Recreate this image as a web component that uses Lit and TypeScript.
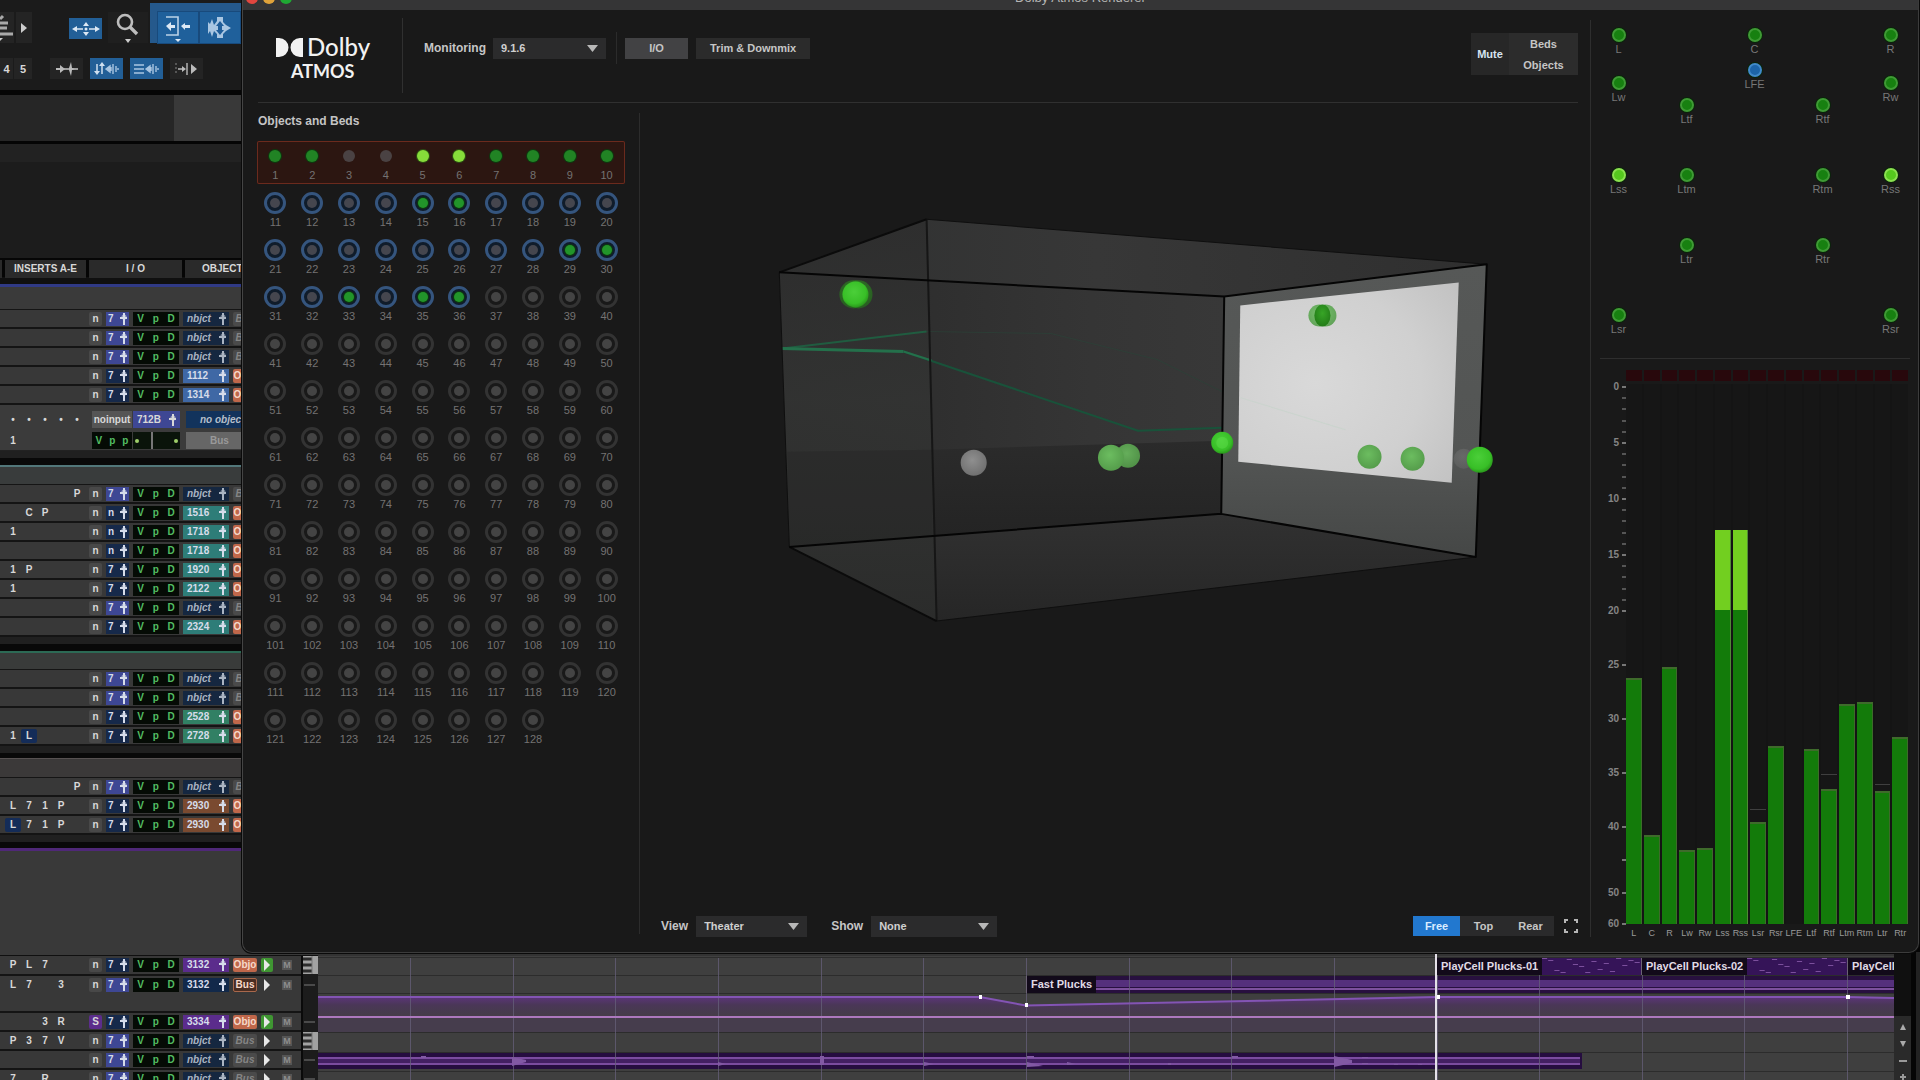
import { LitElement, html, svg, css, nothing } from "lit";
import { customElement } from "lit/decorators.js";
import { classMap } from "lit/directives/class-map.js";

const FONT = css`"Liberation Sans", Arial, sans-serif`;

/* ---------- track list ---------- */

type Track = {
  inserts?: string[];
  lit?: number;
  rec?: string;
  input?: string;
  inTone?: "indigo" | "navy";
  out?: string;
  tone?: "none" | "blue" | "teal" | "green" | "orange" | "purple" | "navy";
  badge?: "Objo" | "Bus" | "off";
  active?: boolean;
  keys?: boolean;
  tall?: boolean;
};

const none = (inserts: string[] = []): Track => ({ inserts, input: "7", inTone: "indigo", out: "nbjct", tone: "none", badge: "off" });
const obj = (out: string, tone: Track["tone"], inserts: string[] = [], input = "7"): Track =>
  ({ inserts, input, inTone: "navy", out, tone, badge: "Objo", active: true });

const GROUP_A: Track[] = [none(), none(), none(), obj("1112", "blue"), obj("1314", "blue")];
const GROUP_B: Track[] = [
  none(["", "", "", "", "P"]),
  obj("1516", "teal", ["", "C", "P"], "n"),
  obj("1718", "teal", ["1"], "n"),
  obj("1718", "teal", [], "n"),
  obj("1920", "teal", ["1", "P"]),
  obj("2122", "teal", ["1"]),
  none(),
  obj("2324", "teal"),
];
const GROUP_C: Track[] = [none(), none(), obj("2528", "green"), { ...obj("2728", "green", ["1", "L"]), lit: 1 }];
const GROUP_D: Track[] = [
  none(["", "", "", "", "P"]),
  obj("2930", "orange", ["L", "7", "1", "P"]),
  { ...obj("2930", "orange", ["L", "7", "1", "P"]), lit: 0 },
];
const GROUP_E: Track[] = [
  { ...obj("3132", "purple", ["P", "L", "7"]), keys: true },
  { ...none(["L", "7", "", "3"]), out: "3132", tone: "navy", badge: "Bus", tall: true },
  { ...obj("3334", "purple", ["", "", "3", "R"]), rec: "S" },
  { ...none(["P", "3", "7", "V"]), keys: true },
  none(),
  none(["7", "", "R"]),
];

const pin = html`<svg class="pin" viewBox="0 0 7 12" aria-hidden="true">
  <path d="M3 0h2v12H3zM0 4h7v2H0z" fill="currentColor" /><circle cx="4" cy="4" r="2.600" fill="currentColor" opacity=".6" />
</svg>`;

@customElement("track-list")
class TrackList extends LitElement {
  static styles = css`
    :host { display: flex; flex-direction: column; width: 318px; flex: none; color: #d8d8d8; font: bold 10px/12px ${FONT}; }
    :host > * { flex: none; }
    button { font: inherit; color: inherit; border: 0; margin: 0; padding: 0; background: none; }
    svg { display: block; }
    .tools { height: 90px; box-sizing: border-box; background: #1b1b1b; display: flex; flex-direction: column; gap: 15px; padding-top: 3px; overflow: hidden; }
    .bar { display: flex; align-items: center; }
    .bar.upper { height: 40px; gap: 2px; align-items: flex-end; }
    .bar.lower { height: 21px; gap: 7px; }
    .tool { display: grid; place-items: center; background: #242424; height: 21px; width: 33px; font-size: 11px; flex: none; }
    .tool.tall { height: 31px; }
    .tool.narrow { width: 16px; }
    .tool.slot { width: 18px; }
    .tool.cut { width: 13px; }
    .tool.first { width: 14px; }
    .tool.blue { background: #225f97; }
    .tool.mid { margin: 0 4px 4px 35px; }
    .tool.lens { width: 40px; background: #1f1f1f; }
    .tool.gapped { margin-left: 11px; }
    .numbers { display: flex; gap: 1px; }
    .modes { display: flex; gap: 2px; background: #25598c; height: 40px; flex: 1; box-sizing: border-box; padding: 9px 0 0 8px; }
    .modes .tool { width: 40px; height: 31px; background: #1f609b; outline: 1px solid #184a7c; }
    .ruler { height: 46px; border: solid #050505; border-width: 5px 0 3px; background: linear-gradient(90deg, #262626 174px, #393939 174px); }
    .blank { height: 114px; background: linear-gradient(#222 18px, #1c1c1c 18px); border-bottom: 2px solid #060606; }
    .heads { display: grid; grid-template-columns: 2px 81px 93px 1fr; column-gap: 3px; height: 17px; background: #050505; border-bottom: 7px solid #101010; }
    .heads span { background: #2a2a2a; text-align: center; line-height: 18px; }
    .heads span:last-child { text-align: left; padding-left: 17px; }
    .group { height: 22px; border-top: 3px solid #303a86; background: #3a3a3a; border-bottom: 1px solid #151515; }
    .group.teal { border-top: 2px solid #52777a; background: #393c3c; height: 17px; }
    .group.green { border-top: 2px solid #2c6a55; background: #393b3a; height: 16px; }
    .group.grey { border-top: 1px solid #575252; background: #3b3939; height: 18px; }
    .space { background: linear-gradient(#202020 7px, #090909 7px); height: 14px; }
    .space.small { height: 12px; }
    .space.thirteen { height: 13px; }
    .folder { height: 104px; background: #393939; border-top: 3px solid #4f2878; border-bottom: 1px solid #101010; }
    .row { height: 19px; box-sizing: border-box; border-bottom: 2px solid #141414; background: #383838; display: grid; align-items: start;
      grid-template-columns: 85px 13px 23px 46px 46px 24px 12px 20px 17px; column-gap: 4px; padding-top: 2px; }
    .row > * { height: 14px; line-height: 14px; text-align: center; overflow: hidden; }
    .row.tall { height: 37px; }
    .row.keyed { height: 20px; }
    .ins { display: grid; grid-template-columns: repeat(5, 16px); padding-left: 5px; }
    .ins span { line-height: 14px; }
    .ins .lit { background: #142c58; border-radius: 2px; }
    .rec { background: #484848; border-radius: 2px; }
    .rec.solo { background: #5c2d8c; }
    .row .in, .row .out { display: flex; align-items: center; justify-content: space-between; padding: 0 2px 0 2px; color: #d6dcea; }
    .row .out { padding: 0 3px 0 4px; }
    .in.indigo { background: #3e4794; }
    .in.navy { background: #16294a; }
    .pin { width: 7px; height: 12px; flex: none; }
    .auto { background: #050b05; color: #53bd63; display: flex; justify-content: space-around; }
    .row .out.none { background: #152740; font-style: italic; color: #aab4c2; }
    .out.navy { background: #12294a; }
    .out.blue { background: #3f68a5; }
    .out.teal { background: #2e7d78; }
    .out.green { background: #318064; }
    .out.orange { background: #7a4a30; }
    .out.purple { background: #5b2c8c; }
    .badge { color: #f6d9cb; background: #c0674a; border-radius: 2px; }
    .badge.Bus { background: #4a2d22; outline: 1px solid #a8684c; outline-offset: -1px; }
    .badge.off { background: #4a4a4a; color: #858585; font-style: italic; }
    .play { display: grid; place-items: center; }
    .play.on { background: #3f9632; border-radius: 2px; }
    .mute { color: #8d8d8d; }
    .mute span { background: #555; padding: 0 1px; font-size: 9px; }
    .row .keys { align-self: stretch; height: auto; margin: -2px 0; background: #1c1c1c; border-left: 2px solid #0a0a0a; }
    .keys svg { width: 100%; height: 18px; }
    .wide { height: 46px; box-sizing: border-box; background: #3b3b3b; padding: 6px 0 0 5px; display: grid; grid-template-columns: 86px 40px 47px 1fr; row-gap: 3px; column-gap: 1px; border-bottom: 1px solid #222; }
    .wide > * { height: 17px; line-height: 17px; }
    .dots, .single { display: grid; grid-template-columns: repeat(5, 16px); text-align: center; }
    .wide .src { background: #555; }
    .wide .bus { background: #3e4794; display: flex; align-items: center; justify-content: space-between; padding: 0 4px; }
    .wide .dest, .wide .send { margin-left: 5px; text-align: left; }
    .wide .dest { background: #12335c; color: #b5bfca; font-style: italic; padding-left: 14px; }
    .wide .send { background: #666; color: #999; padding-left: 24px; }
    .wide .meter { background: linear-gradient(90deg, #0a140a 18px, #777 18px 20px, #0a140a 20px); display: flex; justify-content: space-between; align-items: center; padding: 0 2px; }
    .meter i { width: 4px; height: 4px; border-radius: 2px; background: #9fcf6a; }
  `;

  row(t: Track) {
    const ins = [0, 1, 2, 3, 4].map((i) => html`<span class=${classMap({ lit: t.lit === i })}>${t.inserts?.[i] ?? ""}</span>`);
    return html`<div class=${classMap({ row: true, tall: !!t.tall, keyed: t.out === "3132" && !!t.keys })}>
      <div class="ins">${ins}</div>
      <button class=${classMap({ rec: true, solo: !!t.rec })}>${t.rec ?? "n"}</button>
      <button class="in ${t.inTone}">${t.input}${pin}</button>
      <div class="auto"><span>V</span><span>p</span><span>D</span></div>
      <button class="out ${t.tone}">${t.out}${pin}</button>
      <button class="badge ${t.badge}">${t.badge === "off" ? "Bus" : t.badge}</button>
      <button class=${classMap({ play: true, on: !!t.active })} aria-label="Play">
        <svg width="8" height="12" viewBox="0 0 8 12"><path d="M1 0l6 6-6 6z" fill="#e8e8e8" /></svg>
      </button>
      <button class="mute"><span>M</span></button>
      <div class="keys">${t.keys
        ? html`<svg viewBox="0 0 15 18" preserveAspectRatio="none"><rect width="15" height="18" fill="#a2a2a2" /><path d="M0 3h9M0 9h9M0 15h9" stroke="#2c2c2c" stroke-width="3" /><path d="M9 0v18" stroke="#777" /></svg>`
        : html`<svg viewBox="0 0 15 18" preserveAspectRatio="none"><path d="M1 9h11" stroke="#4a4a4a" stroke-width="2" /></svg>`}</div>
    </div>`;
  }

  render() {
    return html`
      <div class="tools">
        <div class="bar upper">
          <button class="tool tall first" aria-label="Fade">
            <svg width="14" height="28"><path d="M0 5l3-3M0 9h8M0 14h7M0 20h13" stroke="#a9a9a9" stroke-width="3" fill="none" /><path d="M-3 24h6l-3 3z" fill="#ccc" /></svg>
          </button>
          <button class="tool tall narrow" aria-label="Next"><svg width="6" height="10"><path d="M0 0l6 5-6 5z" fill="#ccc" /></svg></button>
          <button class="tool blue mid" aria-label="Zoom toggle">
            <svg width="28" height="14" viewBox="0 0 28 14"><path d="M3 7h8M17 7h8" stroke="#dce8f4" stroke-width="1.5" /><path d="M0 7l5-3v6zM28 7l-5-3v6zM14 0l3 4h-6zM14 14l3-4h-6z" fill="#dce8f4" /><circle cx="14" cy="7" r="1.5" fill="#dce8f4" /></svg>
          </button>
          <button class="tool tall lens" aria-label="Zoomer">
            <svg width="24" height="30" viewBox="0 0 24 30"><circle cx="9" cy="9" r="7" fill="none" stroke="#bdbdbd" stroke-width="2.6" /><path d="M14 14l7 7" stroke="#bdbdbd" stroke-width="3.4" /><path d="M9 26h6l-3 4z" fill="#ccc" /></svg>
          </button>
          <div class="modes">
            <button class="tool" aria-label="Trim">
              <svg width="28" height="28" viewBox="0 0 28 28"><path d="M2 3h12v18H2" fill="none" stroke="#bcd2e8" stroke-width="1.6" /><path d="M2 12l5-4v3h4v3H7v3zM17 12l4-3v2h5v3h-5v2z" fill="#dce8f4" /><path d="M11 25h6l-3 3z" fill="#dce8f4" /></svg>
            </button>
            <button class="tool" aria-label="Selector">
              <svg width="26" height="24" viewBox="0 0 26 24"><path d="M1 6v12l2-3 2 6 2-6 3 3v4h6v-4l3-3 5-3-5-3-3-3V1h-6v4L7 9 5 3 3 8z" fill="#a9c6e2" /><path d="M13 5l4 5h-2v4h2l-4 5-4-5h2v-4H9z" fill="#1f5d99" /></svg>
            </button>
          </div>
        </div>
        <div class="bar lower">
          <div class="numbers"><button class="tool cut">4</button><button class="tool slot">5</button></div>
          <button class="tool gapped" aria-label="Tab to transient">
            <svg width="24" height="16" viewBox="0 0 24 16"><path d="M1 7h4V4l5 4-5 4V9H1z" fill="#bbb" /><path d="M9 8h14" stroke="#bbb" stroke-width="1.6" /><path d="M14 7l2-6 1 6 3 1-3 1-1 6-2-6z" fill="#bbb" /></svg>
          </button>
          <button class="tool blue" aria-label="Link timeline">
            <svg width="26" height="14" viewBox="0 0 26 14"><path d="M3 2v9M8 3v9" stroke="#cfe0f0" stroke-width="1.5" /><path d="M0 9h6l-3 4zM5 4h6L8 0z" fill="#cfe0f0" /><path d="M12 7l4-3v6zM17 5v4M19 2v10M22 4v6M24 6v2" fill="#a9c6e2" stroke="#a9c6e2" stroke-width="1.4" /></svg>
          </button>
          <button class="tool blue" aria-label="Link track">
            <svg width="26" height="14" viewBox="0 0 26 14"><path d="M0 3h10M0 7h10M0 11h10" stroke="#a9c6e2" stroke-width="1.5" /><path d="M12 7l4-3v6zM17 5v4M19 2v10M22 4v6M24 6v2" fill="#a9c6e2" stroke="#a9c6e2" stroke-width="1.4" /></svg>
          </button>
          <button class="tool" aria-label="Insertion follows playback">
            <svg width="24" height="14" viewBox="0 0 24 14"><path d="M1 1v12" stroke="#888" stroke-dasharray="2 2" /><path d="M3 7h6M12 1v12" stroke="#bbb" stroke-width="1.4" /><path d="M7 4l4 3-4 3zM16 2l6 5-6 5z" fill="#bbb" /></svg>
          </button>
        </div>
      </div>
      <div class="ruler"></div>
      <div class="blank"></div>
      <div class="heads"><span></span><span>INSERTS A-E</span><span>I / O</span><span>OBJECT</span></div>
      <div class="group"></div>
      ${GROUP_A.map((t) => this.row(t))}
      <div class="wide">
        <div class="dots"><span>•</span><span>•</span><span>•</span><span>•</span><span>•</span></div>
        <button class="src">noinput</button>
        <button class="bus">712B${pin}</button>
        <button class="dest">no object</button>
        <div class="single"><span>1</span></div>
        <div class="auto"><span>V</span><span>p</span><span>p</span></div>
        <div class="meter"><i></i><i></i></div>
        <button class="send">Bus</button>
      </div>
      <div class="space"></div>
      <div class="group teal"></div>
      ${GROUP_B.map((t) => this.row(t))}
      <div class="space"></div>
      <div class="group green"></div>
      ${GROUP_C.map((t) => this.row(t))}
      <div class="space small"></div>
      <div class="group grey"></div>
      ${GROUP_D.map((t) => this.row(t))}
      <div class="space thirteen"></div>
      <div class="folder"></div>
      ${GROUP_E.map((t) => this.row(t))}
    `;
  }
}

/* ---------- timeline ---------- */

const LANES_W = 1576;
const pct = (x: number) => `${(x / LANES_W) * 100}%`;
const NOTES = [0, 2, 12, 14, 1, 6, 8, 15, 3, 11, 5, 13, 0, 7, 2, 4];

@customElement("track-lanes")
class TrackLanes extends LitElement {
  static styles = css`
    :host { display: flex; flex: 1; align-self: flex-end; height: 128px; background: #3f3f3f; font: bold 11px/17px ${FONT}; color: #e0dbe6; }
    .lanes { position: relative; flex: 1; overflow: hidden; }
    .lanes > svg { position: absolute; inset: 0; width: 100%; height: 128px; }
    .clip { position: absolute; height: 17px; box-sizing: border-box; border-left: 1px solid #6b6274; display: flex; overflow: hidden; }
    .clip.cell { top: 6px; background: #351458; }
    .clip.fast { top: 24px; }
    .clip span { background: #120a1a; padding: 0 4px; white-space: nowrap; flex: none; }
    .clip svg { flex: 1; height: 17px; }
    .head { position: absolute; top: 0; bottom: 0; width: 2px; background: #e4e0e8; }
    .side { width: 17px; background: linear-gradient(#101010 64px, #2a2a2a 64px); display: flex; flex-direction: column; align-items: center; padding-top: 72px; box-sizing: border-box; gap: 11px; }
    .side button { border: 0; padding: 0; background: none; width: 12px; height: 7px; display: grid; place-items: center; }
    .edge { width: 9px; box-sizing: border-box; border-left: 5px solid #050505; background: #222; }
  `;

  render() {
    const beats = Array.from({ length: 15 }, (_, i) => 92 + Math.round(i * 102.65));
    const cells: [number, number, string][] = [[1118, 205, "PlayCell Plucks-01"], [1323, 206, "PlayCell Plucks-02"], [1529, 47, "PlayCell"]];
    return html`
      <div class="lanes">
        <svg viewBox="0 0 1576 128" preserveAspectRatio="none" aria-hidden="true">
          <defs><linearGradient id="fade" x1="0" y1="0" x2="0" y2="1"><stop offset="0" stop-color="#5b3478" /><stop offset=".4" stop-color="#4a3757" /><stop offset="1" stop-color="#453d48" /></linearGradient></defs>
          <rect y="0" width="1576" height="4" fill="#333" />
          <path d="M0 45H662L708 53 1118 45H1576V65H0z" fill="url(#fade)" />
          <rect y="66" width="1576" height="15" fill="#463d4d" />
          <path d="M0 5.5H1576M0 23.5H1576M0 41.5H1576M0 80.5H1576M0 100.5H1576M0 119.5H1576" stroke="#2c2c2c" />
          <rect x="708" y="24" width="868" height="17" fill="#28103f" />
          <rect x="708" y="28" width="868" height="7" fill="#55307c" />
          <rect x="708" y="36" width="868" height="2" fill="#7d519d" />
          <rect y="101" width="1264" height="16" fill="#260d40" />
          <rect y="106" width="1262" height="5" fill="#432063" />
          <path d="M0 106H1262M0 112H1262" stroke="#7b4ca0" stroke-width="2" />
          <g stroke="#66607a">${beats.map((x) => svg`<path d="M${x}.5 6V128" opacity=".75" />`)}</g>
          <path d="M0 45H662L708 53.500 1118 45H1529L1576 46" fill="none" stroke="#8354b4" stroke-width="2" />
          <path d="M0 65H1576" stroke="#ad78be" stroke-width="2" />
          <g fill="#fff"><rect x="661" y="43" width="3" height="4" /><rect x="707" y="51" width="3" height="4" /><rect x="1118" y="43" width="4" height="4" /><rect x="1528" y="43" width="4" height="4" /></g>
          <g fill="#8259a4">
            <path d="M103 104h5v2h-5zM194 105l14 3v2l-14 4zM1016 104l18 4v3l-18 4zM709 104h7v2h-7zM709 110l16 4-16 1zM502 104h4v9h-4zM400 110l8 2-8 2zM606 110l10 2-10 2zM749 110l9 2-9 1zM914 104h6v2h-6zM1044 105h6v1h-6zM1044 111h6v1h-6zM1076 112h4v1h-4zM1100 112h4v1h-4zM850 111h3v2h-3z" />
          </g>
        </svg>
        ${cells.map(([x, w, name]) => html`<div class="clip cell" style="left:${pct(x)};width:${pct(w)}"><span>${name}</span>
          <svg viewBox="0 0 96 17" preserveAspectRatio="none" aria-hidden="true"><g fill="#7b4f9c">${NOTES.map((y, i) => svg`<rect x=${i * 6} y=${Math.min(y, 14)} width="5" height="1" />`)}</g></svg></div>`)}
        <div class="clip fast" style="left:${pct(708)}"><span>Fast Plucks</span></div>
        <div class="head" style="left:${pct(1117)}"></div>
      </div>
      <div class="side">
        <button aria-label="Scroll up"><svg width="6" height="6"><path d="M0 6l3-6 3 6z" fill="#aaa" /></svg></button>
        <button aria-label="Scroll down"><svg width="6" height="6"><path d="M0 0h6L3 6z" fill="#aaa" /></svg></button>
        <button aria-label="Zoom out"><svg width="8" height="4"><path d="M0 2h8" stroke="#999" stroke-width="2" /></svg></button>
        <button aria-label="Zoom in"><svg width="6" height="6"><path d="M0 3h6M3 0v6" stroke="#999" stroke-width="2" /></svg></button>
      </div>
      <div class="edge"></div>
    `;
  }
}

/* ---------- object and bed grid ---------- */

const BED_GREEN = [1, 2, 7, 8, 9, 10];
const BED_BRIGHT = [5, 6];
const OBJ_GREEN = [15, 16, 29, 30, 33, 35, 36];

@customElement("object-grid")
class ObjectGrid extends LitElement {
  static styles = css`
    :host { display: block; font: 11px/14px ${FONT}; color: #747272; }
    h2 { margin: 0 0 12px 1px; font-size: 12px; line-height: 16px; color: #c4c4c4; }
    .beds, .objects { display: grid; grid-template-columns: repeat(10, 1fr); text-align: center; }
    .beds { box-sizing: border-box; height: 43px; background: #2c1611; box-shadow: inset 0 0 0 1px #6b2a1d; border-radius: 2px; padding-top: 9px; margin-bottom: 8px; }
    .cell { display: flex; flex-direction: column; align-items: center; }
    .beds .cell { gap: 6px; }
    .objects { row-gap: 10px; }
    .objects .cell { gap: 1px; }
    .dot { width: 12px; height: 12px; border-radius: 50%; background: #4a4243; }
    .dot.green { background: #218324; box-shadow: 0 0 0 1px #0d3a0f; }
    .dot.bright { background: #86dc3a; box-shadow: 0 0 0 1px #2c4f12; }
    .ring { box-sizing: border-box; width: 22px; height: 22px; border-radius: 50%; border: 3px solid #333; display: grid; place-items: center; }
    .ring .dot { background: #444; width: 10px; height: 10px; }
    .ring.used { border-color: #35557e; background: #101c2a; }
    .ring.used .dot { background: #45464e; }
    .ring.used .dot.green { background: #22942a; }
  `;
  render() {
    const beds = Array.from({ length: 10 }, (_, i) => i + 1);
    const objects = Array.from({ length: 118 }, (_, i) => i + 11);
    return html`
      <h2>Objects and Beds</h2>
      <div class="beds">${beds.map((n) => html`<div class="cell"><i class=${classMap({ dot: true, green: BED_GREEN.includes(n), bright: BED_BRIGHT.includes(n) })}></i>${n}</div>`)}</div>
      <div class="objects">${objects.map((n) => html`<div class="cell"><i class=${classMap({ ring: true, used: n <= 36 })}><i class=${classMap({ dot: true, green: OBJ_GREEN.includes(n) })}></i></i>${n}</div>`)}</div>
    `;
  }
}

/* ---------- room view ---------- */

@customElement("room-view")
class RoomView extends LitElement {
  static styles = css`
    :host { display: block; min-height: 0; }
    svg { display: block; width: 100%; height: 100%; }
  `;
  render() {
    const ball = (x: number, y: number, r: number, fill: string, o = 1) => svg`<circle cx=${x} cy=${y} r=${r} fill="url(#${fill})" opacity=${o} />`;
    return html`<svg viewBox="641 104 948 800" preserveAspectRatio="xMidYMin meet" role="img" aria-label="Room">
      <defs>
        <linearGradient id="top" x1="0" y1="0" x2="1" y2="0"><stop offset="0" stop-color="#2f3030" /><stop offset=".45" stop-color="#373737" /><stop offset="1" stop-color="#2f2f2f" /></linearGradient>
        <linearGradient id="left" x1="0" y1="0" x2="0" y2="1"><stop offset="0" stop-color="#2d2d2d" /><stop offset=".45" stop-color="#333433" /><stop offset="1" stop-color="#2c2d2c" /></linearGradient>
        <linearGradient id="back" x1="0" y1="0" x2="1" y2="0"><stop offset="0" stop-color="#292929" /><stop offset=".7" stop-color="#353535" /><stop offset="1" stop-color="#383838" /></linearGradient>
        <linearGradient id="low" x1="0" y1="0" x2="0" y2="1"><stop offset="0" stop-color="#2b2b2b" /><stop offset="1" stop-color="#232323" /></linearGradient>
        <linearGradient id="floor" x1="0" y1="0" x2="0" y2="1"><stop offset="0" stop-color="#313131" /><stop offset="1" stop-color="#262626" /></linearGradient>
        <linearGradient id="front" x1="0" y1="0" x2="0" y2="1"><stop offset="0" stop-color="#565857" /><stop offset=".65" stop-color="#535554" /><stop offset="1" stop-color="#454746" /></linearGradient>
        <radialGradient id="screen" cx=".35" cy=".5" r=".8"><stop offset="0" stop-color="#d9d9d9" /><stop offset=".6" stop-color="#d0d0d0" /><stop offset="1" stop-color="#c2c2c2" /></radialGradient>
        <radialGradient id="g" cx=".45" cy=".4" r=".6"><stop offset="0" stop-color="#4bcf39" /><stop offset=".75" stop-color="#38bf27" /><stop offset="1" stop-color="#2a981c" /></radialGradient>
        <radialGradient id="p" cx=".45" cy=".4" r=".6"><stop offset="0" stop-color="#6cbd60" /><stop offset="1" stop-color="#559d4b" /></radialGradient>
        <radialGradient id="d" cx=".5" cy=".4" r=".6"><stop offset="0" stop-color="#37a526" /><stop offset="1" stop-color="#237c18" /></radialGradient>
        <radialGradient id="w" cx=".45" cy=".4" r=".6"><stop offset="0" stop-color="#8f8f8f" /><stop offset="1" stop-color="#707070" /></radialGradient>
      </defs>
      <path d="M780 273L927 220 1486 265 1224 297z" fill="url(#top)" />
      <path d="M790 547L1221 514 1475 557 937 621z" fill="url(#floor)" />
      <path d="M780 273L1224 297 1221 514 790 547z" fill="url(#back)" />
      <path d="M788 452L932 450 1222 441 1221 514 790 547z" fill="url(#low)" />
      <path d="M780 273L927 220 937 621 790 547z" fill="url(#left)" opacity=".82" />
      <path d="M788 452L932 450 933 536 790 547z" fill="#222" opacity=".35" />
      <path d="M1224 297L1486 265 1475 557 1221 514z" fill="url(#front)" />
      <path d="M1240 306L1458 283 1451 483 1238 462z" fill="url(#screen)" />
      <g fill="none" stroke-linejoin="round">
        <path d="M783 349L927 332" stroke="#205c40" stroke-width="2" />
        <path d="M927 332L1051 334 1157 360 1222 392" stroke="#2a4539" stroke-width="1" opacity=".6" />
        <path d="M1240 398L1345 430" stroke="#c3d3c8" opacity=".6" />
        <path d="M783 349L904 352" stroke="#24704b" stroke-width="3" />
        <path d="M904 352L1138 431 1222 428" stroke="#19523a" stroke-width="2" />
        <path d="M904 352L932 361" stroke="#24704b" stroke-width="2" />
        <path d="M927 220L937 621" stroke="#161616" stroke-width="2" />
        <path d="M780 273L790 547M927 220L1486 265M937 621L1475 557" stroke="#0f0f0f" stroke-width="1" />
        <path d="M780 273L927 220M790 547L937 621" stroke="#0b0b0b" stroke-width="2" />
        <path d="M780 273L1224 297 1486 265 1475 557 1221 514 790 547M1224 297L1221 514" stroke="#050505" stroke-width="2" />
      </g>
      ${ball(854, 295, 14, "d", 0.6)}${ball(859, 295, 14, "d", 0.6)}${ball(856, 295, 13, "g")}
      ${ball(1319, 316, 11, "p", 0.9)}${ball(1325, 316, 11, "p", 0.9)}<ellipse cx="1322" cy="316" rx="8" ry="11" fill="url(#d)" />
      ${ball(974, 463, 13, "w")}
      ${ball(1128, 456, 12, "p", 0.9)}${ball(1111, 458, 13, "p")}
      ${ball(1222, 443, 11, "g")}<circle cx="1222" cy="443" r="6" fill="#5bdd48" opacity=".5" />
      ${ball(1369, 457, 12, "p")}${ball(1412, 459, 12, "p")}
      ${ball(1463, 459, 10, "w", 0.35)}${ball(1479, 460, 13, "g")}
    </svg>`;
  }
}

/* ---------- speaker map ---------- */

const SPEAKERS: [string, number, number][] = [
  ["L", -136, 35], ["C", 0, 35], ["R", 136, 35], ["LFE", 0, 70], ["Lw", -136, 83], ["Rw", 136, 83],
  ["Ltf", -68, 105], ["Rtf", 68, 105], ["Lss", -136, 175], ["Ltm", -68, 175], ["Rtm", 68, 175], ["Rss", 136, 175],
  ["Ltr", -68, 245], ["Rtr", 68, 245], ["Lsr", -136, 315], ["Rsr", 136, 315],
];

@customElement("speaker-map")
class SpeakerMap extends LitElement {
  static styles = css`
    :host { display: block; position: relative; height: 348px; flex: none; font: 11px/14px ${FONT}; color: #777; }
    .spk { position: absolute; width: 40px; margin: -17px 0 0 -20px; display: flex; flex-direction: column; align-items: center; }
    .spk i { box-sizing: border-box; width: 14px; height: 14px; border-radius: 50%; background: #178010; border: 2px solid #3f9a35; box-shadow: 0 0 0 1px #0a240a; }
    .spk.hot i { background: #55c81e; border-color: #8be050; }
    .spk.sub i { background: #1d64a8; border-color: #4189c9; }
  `;
  render() {
    return SPEAKERS.map(([name, x, y]) => html`<div class=${classMap({ spk: true, hot: name === "Lss" || name === "Rss", sub: name === "LFE" })}
      style="left:calc(50% + ${x}px);top:${y}px"><i></i>${name}</div>`);
  }
}

/* ---------- meters ---------- */

const BASE = 540;
const METERS: [string, number, number?][] = [
  ["L", 246], ["C", 89], ["R", 257], ["Lw", 74], ["Rw", 76], ["Lss", 394], ["Rss", 394], ["Lsr", 102, 114],
  ["Rsr", 178], ["LFE", 0], ["Ltf", 175], ["Rtf", 135, 149], ["Ltm", 220], ["Rtm", 222], ["Ltr", 133, 139], ["Rtr", 187],
];
const SCALE: [string, number][] = [["0", 3], ["5", 59], ["10", 115], ["15", 171], ["20", 227], ["25", 281], ["30", 335], ["35", 389], ["40", 443], ["", 476], ["50", 509], ["60", 540]];
const share = (v: number) => `${(v / BASE) * 100}%`;

@customElement("level-meters")
class LevelMeters extends LitElement {
  static styles = css`
    :host { display: grid; grid-template-columns: 35px 1fr; grid-template-rows: 11px 1fr 15px; row-gap: 3px; flex: 1; min-height: 0; padding: 11px 10px 10px 0; font: 9px/12px ${FONT}; color: #9a9a9a; }
    .clips, .bars, .names { display: grid; grid-template-columns: repeat(16, minmax(0, 1fr)); column-gap: 2px; grid-column: 2; }
    .clips i { background: #28080c; }
    .scale { position: relative; grid-column: 1; grid-row: 2; font-weight: bold; font-size: 10px; color: #858585; }
    .tick { position: absolute; right: 0; display: flex; align-items: center; gap: 3px; height: 12px; margin-top: -6px; }
    .tick::after { content: ""; width: 4px; height: 2px; background: #777; }
    .tick.minor::after { background: #555; }
    .bars { grid-row: 2; background: #141414; }
    .bar { position: relative; display: flex; flex-direction: column; justify-content: flex-end; background: #161616; }
    .fill { background: #137b0a; box-sizing: border-box; border: solid #3e6b2b; border-width: 2px 1px 0 0; }
    .hot { background: linear-gradient(#72cf20 80px, #137b0a 80px); border: 0; border-right: 1px solid #4f8a35; }
    .peak { position: absolute; left: 0; right: 0; height: 1px; background: #3f3f3f; }
    .names span { display: flex; justify-content: center; white-space: nowrap; }
  `;
  render() {
    const minor = Array.from({ length: 20 }, (_, i) => i).filter((i) => i % 5).map((i) => 3 + Math.round(i * 11.2));
    return html`
      <div class="clips">${METERS.map(() => html`<i></i>`)}</div>
      <div class="scale">
        ${SCALE.map(([t, y]) => html`<span class="tick" style="top:${share(y)}">${t}</span>`)}
        ${minor.map((y) => html`<span class="tick minor" style="top:${share(y)}"></span>`)}
      </div>
      <div class="bars">${METERS.map(([, h, peak]) => html`<div class="bar">
        ${peak ? html`<i class="peak" style="bottom:${share(peak)}"></i>` : nothing}
        ${h ? html`<div class=${classMap({ fill: true, hot: h > 313 })} style="height:${share(h)}"></div>` : nothing}</div>`)}</div>
      <div class="names">${METERS.map(([n]) => html`<span>${n}</span>`)}</div>
    `;
  }
}

/* ---------- app ---------- */

const arrow = html`<svg width="11" height="7" viewBox="0 0 11 7" aria-hidden="true"><path d="M0 0h11L5.500 7z" fill="#b8b8b8" /></svg>`;

@customElement("app-root")
class AppRoot extends LitElement {
  static styles = css`
    :host { display: block; position: relative; height: 100vh; overflow: hidden; background: #050505; font: bold 12px/16px ${FONT}; color: #c6c6c6; }
    .daw { display: flex; height: 100%; overflow: hidden; }
    .window { position: absolute; top: -16px; left: 242px; right: 1px; bottom: 127px; box-sizing: border-box; background: #191919; border: 1px solid #3c3c3c; border-left-color: #444; border-radius: 10px; box-shadow: 0 0 0 1px #0a0a0a; display: flex; flex-direction: column; overflow: hidden; }
    .title { height: 25px; flex: none; background: #353536; display: grid; grid-template-columns: 1fr auto 1fr; align-items: center; font-size: 13px; font-weight: normal; color: #b5b5b5; line-height: 18px; }
    .lights { display: flex; gap: 5px; padding-left: 3px; }
    .lights i { width: 12px; height: 12px; border-radius: 50%; background: #e2463f; }
    .lights i:nth-child(2) { background: #dfa23a; }
    .lights i:nth-child(3) { background: #1fa833; }
    .body { flex: 1; min-height: 0; display: grid; grid-template-columns: minmax(0, 1fr) 328px; }
    .main { display: flex; flex-direction: column; min-height: 0; }
    .header { margin: 0 12px 0 15px; height: 93px; box-sizing: border-box; border-bottom: 1px solid #303030; display: flex; align-items: flex-start; }
    .brand { box-sizing: border-box; width: 145px; height: 75px; margin-top: 8px; border-right: 1px solid #303030; display: flex; flex-direction: column; padding: 15px 0 0 18px; color: #f2f2f2; font-family: Lato, "Open Sans", sans-serif; font-weight: normal; }
    .logo { display: flex; align-items: center; gap: 4px; font-size: 24px; line-height: 28px; font-weight: 500; }
    .atmos { font-size: 18px; line-height: 20px; font-weight: bold; padding-left: 15px; }
    .controls { display: flex; align-items: center; flex: 1; margin-top: 21px; height: 34px; padding-left: 21px; }
    .mutes { margin-top: 23px; display: grid; grid-template-columns: 38px 69px; background: #2c2c2c; font-size: 11px; }
    .mutes .mode { background: #272727; color: #d7e4f0; grid-row: span 2; height: 42px; }
    .mutes button { height: 21px; }
    button { font: inherit; color: inherit; border: 0; padding: 0; margin: 0; background: none; }
    .pick { position: relative; display: flex; height: 21px; margin-left: 7px; background: #2b2b2c; font-size: 11px; width: 113px; }
    .pick.view { width: 111px; margin-left: 8px; }
    .pick.show { width: 126px; margin-left: 8px; }
    .pick select { appearance: none; font: inherit; color: #cfcfcf; background: none; border: 0; width: 100%; padding: 0 8px; outline: 0; }
    .pick svg { position: absolute; right: 8px; top: 7px; pointer-events: none; }
    .rule { width: 1px; height: 32px; background: #2b2b2b; margin: 0 8px 0 10px; }
    .btn { height: 21px; font-size: 11px; background: #2b2b2b; padding: 0 14px; }
    .btn.io { background: #424244; width: 63px; padding: 0; margin-right: 8px; }
    .work { flex: 1; min-height: 0; display: grid; grid-template-columns: 397px minmax(0, 1fr); }
    object-grid { border-right: 1px solid #2c2c2c; padding: 0 14px; margin: 10px 0 18px; }
    .stage { display: flex; flex-direction: column; min-height: 0; }
    room-view { flex: 1; }
    .footer { display: flex; align-items: center; height: 24px; padding: 0 12px 14px 21px; }
    .footer .second { margin-left: 24px; }
    .tabs { display: flex; margin-left: auto; background: #2a2a2b; font-size: 11px; height: 20px; }
    .tabs button { width: 47px; }
    .tabs .on { background: #2278cf; color: #d9ecff; }
    .full { margin-left: 10px; width: 14px; height: 14px; display: grid; }
    .aside { border-left: 1px solid #2e2e2e; margin: 10px 0 15px; display: flex; flex-direction: column; min-height: 0; }
    speaker-map { margin-top: -10px; }
    .line { height: 1px; flex: none; background: #2e2e2e; margin: 0 8px 0 9px; }
    level-meters { margin-bottom: -15px; }
  `;
  render() {
    return html`
      <div class="daw"><track-list></track-list><track-lanes></track-lanes></div>
      <div class="window">
        <div class="title"><div class="lights"><i></i><i></i><i></i></div><span>Dolby Atmos Renderer</span></div>
        <div class="body">
          <div class="main">
            <div class="header">
              <div class="brand">
                <div class="logo"><svg width="27" height="19" viewBox="0 0 27 19" aria-hidden="true"><path d="M0 0h3a9.500 9.500 0 0 1 0 19H0zM27 0h-3a9.500 9.500 0 0 0 0 19h3z" fill="#f2f2f2" /></svg>Dolby</div>
                <div class="atmos">ATMOS</div>
              </div>
              <div class="controls">
                <label for="mon">Monitoring</label>
                <div class="pick"><select id="mon"><option>9.1.6</option></select>${arrow}</div>
                <div class="rule"></div>
                <button class="btn io">I/O</button>
                <button class="btn">Trim &amp; Downmix</button>
              </div>
              <div class="mutes"><button class="mode">Mute</button><button>Beds</button><button>Objects</button></div>
            </div>
            <div class="work">
              <object-grid></object-grid>
              <div class="stage">
                <room-view></room-view>
                <div class="footer">
                  <label for="view">View</label>
                  <div class="pick view"><select id="view"><option>Theater</option></select>${arrow}</div>
                  <label class="second" for="show">Show</label>
                  <div class="pick show"><select id="show"><option>None</option></select>${arrow}</div>
                  <div class="tabs"><button class="on">Free</button><button>Top</button><button>Rear</button></div>
                  <button class="full" aria-label="Full screen"><svg width="14" height="14" viewBox="0 0 14 14"><path d="M1 4V1h3M10 1h3v3M13 10v3h-3M4 13H1v-3" fill="none" stroke="#b5b5b5" stroke-width="2" /></svg></button>
                </div>
              </div>
            </div>
          </div>
          <div class="aside">
            <speaker-map></speaker-map>
            <div class="line"></div>
            <level-meters></level-meters>
          </div>
        </div>
      </div>
    `;
  }
}
